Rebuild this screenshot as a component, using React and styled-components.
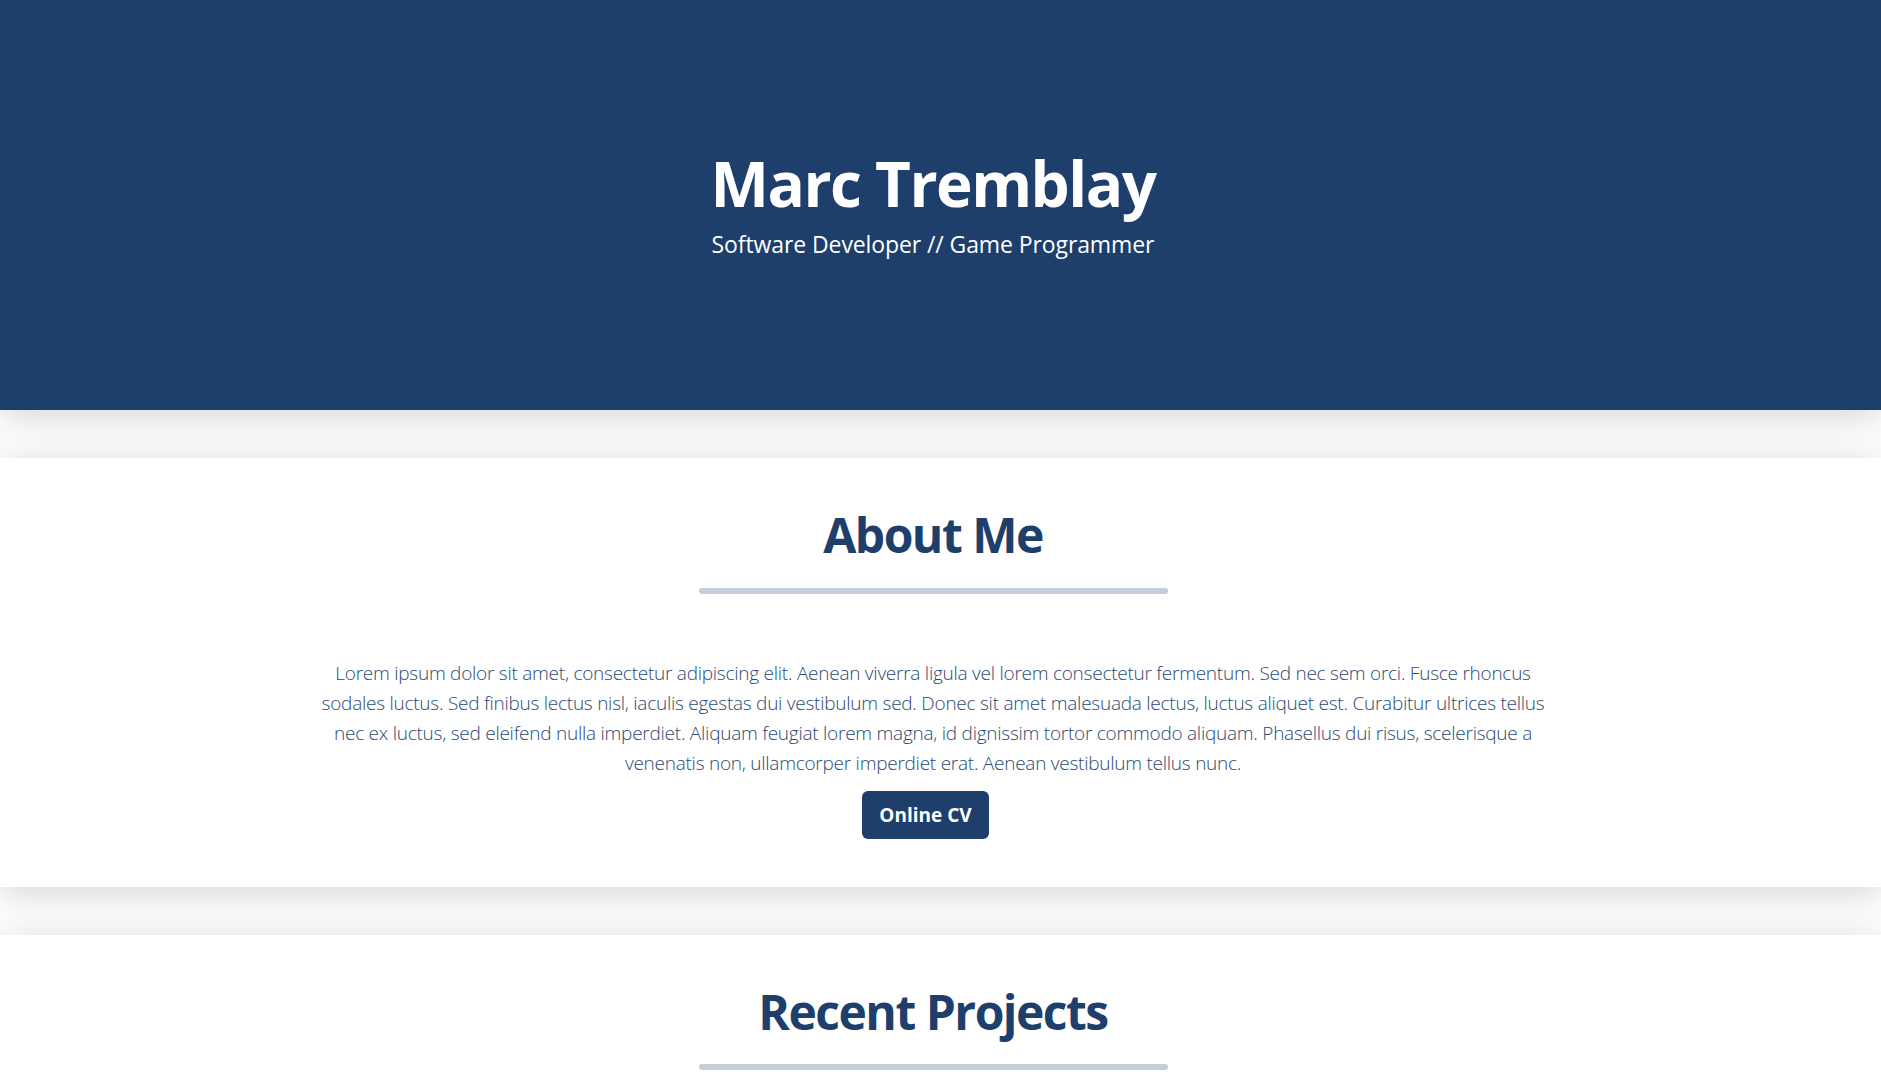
import styled, { createGlobalStyle } from 'styled-components';

const GlobalStyle = createGlobalStyle`
  html, body {
    margin: 0;
    padding: 0;
    background: #ffffff;
    font-family: "Segoe UI", "Open Sans", "Noto Sans", sans-serif;
    color: #1e3e6b;
  }
`;

const ABOUT_TEXT =
  'Lorem ipsum dolor sit amet, consectetur adipiscing elit. Aenean viverra ligula vel lorem consectetur fermentum. Sed nec sem orci. Fusce rhoncus sodales luctus. Sed finibus lectus nisl, iaculis egestas dui vestibulum sed. Donec sit amet malesuada lectus, luctus aliquet est. Curabitur ultrices tellus nec ex luctus, sed eleifend nulla imperdiet. Aliquam feugiat lorem magna, id dignissim tortor commodo aliquam. Phasellus dui risus, scelerisque a venenatis non, ullamcorper imperdiet erat. Aenean vestibulum tellus nunc.';

const App = () => (
  <>
    <GlobalStyle />
    <Hero>
      <HeroName>Marc Tremblay</HeroName>
      <HeroRole>Software Developer // Game Programmer</HeroRole>
    </Hero>
    <Section $layer={2}>
      <SectionTitle>About Me</SectionTitle>
      <Divider />
      <AboutText>{ABOUT_TEXT}</AboutText>
      <CvButton href="#cv">Online CV</CvButton>
    </Section>
    <Section $layer={1}>
      <SectionTitle>Recent Projects</SectionTitle>
      <Divider />
    </Section>
  </>
);

export default App;

const Hero = styled.header`
  position: relative;
  z-index: 3;
  height: 410px;
  box-sizing: border-box;
  padding: 0 15px 4px 0;
  display: flex;
  flex-direction: column;
  align-items: center;
  justify-content: center;
  background: #1e3e6b;
  color: #ffffff;
  box-shadow: 0 6px 36px rgba(0, 0, 0, 0.18);
`;

const HeroName = styled.h1`
  margin: 0;
  font-size: 62px;
  font-weight: 700;
  letter-spacing: -1.5px;
  line-height: 1.2;
`;

const HeroRole = styled.p`
  margin: 9px 0 0;
  font-size: 23px;
  font-weight: 400;
  letter-spacing: -0.1px;
  line-height: 1.3;
`;

const Section = styled.section`
  position: relative;
  z-index: ${(p) => p.$layer};
  margin-top: 48px;
  padding: 48px 15px 48px 0;
  display: flex;
  flex-direction: column;
  align-items: center;
  background: #ffffff;
  box-shadow: 0 6px 36px rgba(0, 0, 0, 0.18);
`;

const SectionTitle = styled.h2`
  margin: 0;
  font-size: 48px;
  font-weight: 700;
  letter-spacing: -1.5px;
  line-height: 1.2;
  color: #1e3e6b;
`;

const Divider = styled.div`
  width: 469px;
  height: 6px;
  margin-top: 24px;
  border-radius: 3px;
  background: #c5cdd8;
`;

const AboutText = styled.p`
  max-width: 1230px;
  margin: 64px 0 13px;
  font-size: 19px;
  font-weight: 300;
  letter-spacing: -0.25px;
  line-height: 30px;
  text-align: center;
  color: #2b4a74;
`;

const CvButton = styled.a`
  display: inline-block;
  margin-right: 15px;
  padding: 10px 17px;
  border-radius: 6px;
  background: #1e3e6b;
  color: #ffffff;
  font-size: 19px;
  font-weight: 700;
  line-height: 28px;
  text-decoration: none;
`;
